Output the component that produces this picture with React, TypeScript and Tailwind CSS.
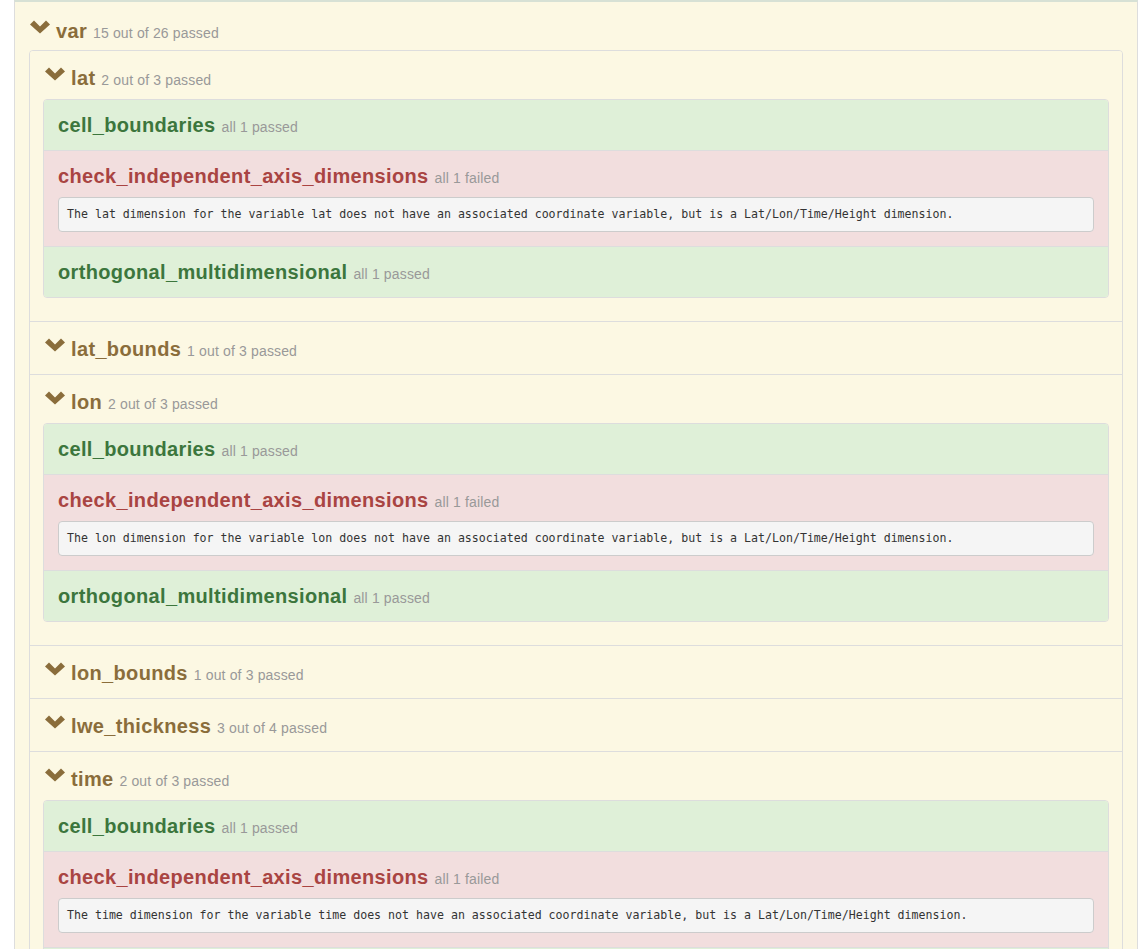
import React from "react";

type Check = { name: string; ok: boolean; summary: string; msg?: string };
type Variable = { name: string; summary: string; checks?: Check[] };

const axisChecks = (v: string): Check[] => [
  { name: "cell_boundaries", ok: true, summary: "all 1 passed" },
  {
    name: "check_independent_axis_dimensions",
    ok: false,
    summary: "all 1 failed",
    msg: `The ${v} dimension for the variable ${v} does not have an associated coordinate variable, but is a Lat/Lon/Time/Height dimension.`,
  },
  { name: "orthogonal_multidimensional", ok: true, summary: "all 1 passed" },
];

const variables: Variable[] = [
  { name: "lat", summary: "2 out of 3 passed", checks: axisChecks("lat") },
  { name: "lat_bounds", summary: "1 out of 3 passed" },
  { name: "lon", summary: "2 out of 3 passed", checks: axisChecks("lon") },
  { name: "lon_bounds", summary: "1 out of 3 passed" },
  { name: "lwe_thickness", summary: "3 out of 4 passed" },
  { name: "time", summary: "2 out of 3 passed", checks: axisChecks("time") },
];

function Chevron() {
  return (
    <svg width="20" height="14" viewBox="0 0 20 14" className="shrink-0">
      <polygon points="0,4.5 4,0.5 10,6.5 16,0.5 20,4.5 10,13.5" fill="#8a6d3b" />
    </svg>
  );
}

function Small({ children }: { children: React.ReactNode }) {
  return (
    <small className="text-[14px] leading-none font-normal text-[#999] tracking-[0.15px]">
      {children}
    </small>
  );
}

function Heading({ name, summary }: { name: string; summary: string }) {
  return (
    <div className="flex items-start gap-[6px]">
      <Chevron />
      <h4 className="text-[20px] leading-[22px] font-bold text-[#8a6d3b] tracking-[0.35px]">
        {name} <Small>{summary}</Small>
      </h4>
    </div>
  );
}

function CheckItem({ c, first }: { c: Check; first: boolean }) {
  return (
    <div
      className={`px-[14px] py-[14px] ${first ? "" : "border-t border-[#ddd]"} ${
        c.ok ? "bg-[#dff0d8]" : "bg-[#f2dede]"
      }`}
    >
      <h4
        className={`text-[20px] leading-[22px] font-bold tracking-[0.35px] ${
          c.ok ? "text-[#3c763d]" : "text-[#a94442]"
        }`}
      >
        {c.name} <Small>{c.summary}</Small>
      </h4>
      {c.msg && (
        <pre className="mt-[10px] px-[8px] py-[8px] bg-[#f5f5f5] border border-[#ccc] rounded-[4px] text-[#333] text-[11.6px] leading-[17px] font-['DejaVu_Sans_Mono',monospace] whitespace-pre-wrap">
          {c.msg}
        </pre>
      )}
    </div>
  );
}

export default function App() {
  return (
    <div className="min-h-[949px] bg-white font-['Liberation_Sans',Arial,sans-serif] overflow-hidden">
      <div className="ml-[14px] w-[1124px] bg-[#fcf8e3] border-x border-[#ddd] border-t-2 border-t-[#d7e1d5] pt-[18px] px-[14px] pb-[14px]">
        <div className="ml-[1px]">
          <Heading name="var" summary="15 out of 26 passed" />
        </div>
        <div className="mt-[8px] border border-[#ddd] rounded-[4px] overflow-hidden">
          {variables.map((v, i) => (
            <div
              key={v.name}
              className={`bg-[#fcf8e3] px-[13px] pt-[16px] pb-[14px] ${i ? "border-t border-[#ddd]" : ""}`}
            >
              <div className="ml-[2px]">
                <Heading name={v.name} summary={v.summary} />
              </div>
              {v.checks && (
                <div className="mt-[10px] mb-[9px] border border-[#ddd] rounded-[4px] overflow-hidden">
                  {v.checks.map((c, j) => (
                    <CheckItem key={c.name} c={c} first={j === 0} />
                  ))}
                </div>
              )}
            </div>
          ))}
        </div>
      </div>
    </div>
  );
}
